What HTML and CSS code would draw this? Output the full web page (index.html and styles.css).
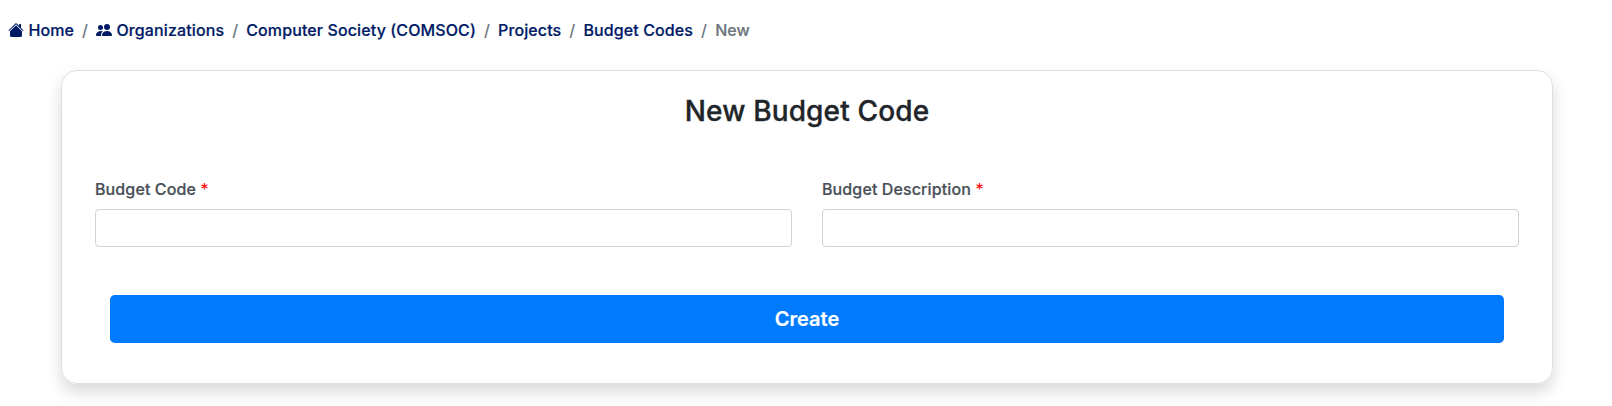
FILE: index.html
```html
<!DOCTYPE html>
<html lang="en">
<head>
<meta charset="utf-8">
<title>New Budget Code</title>
<link rel="stylesheet" href="styles.css">
</head>
<body>
<nav>
<ol class="breadcrumb">
<li><a href="#"><svg class="icon" viewBox="0 0 16 16"><path d="M8.707 1.5a1 1 0 0 0-1.414 0L.646 8.146a.5.5 0 0 0 .708.708L8 2.207l6.646 6.647a.5.5 0 0 0 .708-.708L13 5.793V2.500a.5.5 0 0 0-.5-.5h-1a.5.5 0 0 0-.5.5v1.293z"/><path d="m8 3.293 6 6V13.500a1.500 1.500 0 0 1-1.500 1.500h-9A1.500 1.500 0 0 1 2 13.500V9.293z"/></svg> Home</a></li>
<li><a href="#"><svg class="icon" viewBox="0 0 16 16"><path d="M7 14s-1 0-1-1 1-4 5-4 5 3 5 4-1 1-1 1zm4-6a3 3 0 1 0 0-6 3 3 0 0 0 0 6m-5.784 6A2.240 2.240 0 0 1 5 13c0-1.355.68-2.750 1.936-3.720A6.300 6.300 0 0 0 5 9c-4 0-5 3-5 4s1 1 1 1zM4.500 8a2.500 2.500 0 1 0 0-5 2.500 2.500 0 0 0 0 5"/></svg> Organizations</a></li>
<li><a href="#">Computer Society (COMSOC)</a></li>
<li><a href="#">Projects</a></li>
<li><a href="#">Budget Codes</a></li>
<li class="active">New</li>
</ol>
</nav>
<main class="card">
<h1 class="title">New Budget Code</h1>
<form>
<div class="fields">
<div class="field"><label for="code">Budget Code <span class="required">*</span></label><input id="code" type="text"></div>
<div class="field"><label for="description">Budget Description <span class="required">*</span></label><input id="description" type="text"></div>
</div>
<button class="submit" type="button">Create</button>
</form>
</main>
</body>
</html>
```
FILE: styles.css
```css
* { box-sizing: border-box; }
body { margin: 0; min-height: 100vh; background: #fff; color: #212529; font: 500 16px/24px Inter, sans-serif; letter-spacing: .115px; -webkit-text-stroke: .2px; overflow: hidden; }
.breadcrumb { display: flex; list-style: none; margin: 0; padding: 18px 8px 0; }
.breadcrumb li + li::before { content: "/"; padding: 0 8px; color: #6c757d; -webkit-text-stroke: 0; }
.breadcrumb a { color: #001a66; text-decoration: none; }
.breadcrumb .active { color: #6c757d; }
.icon { width: 16px; height: 16px; fill: currentColor; vertical-align: -2px; }
.card { width: 1492px; height: 314px; margin: 28px auto 0 61px; padding: 23px 33px; border: 1px solid #dfdfdf; border-radius: 16px; box-shadow: 0 8px 16px rgba(0, 0, 0, .15); }
.title { margin: 0; text-align: center; font-size: 28px; line-height: 34px; font-weight: 500; letter-spacing: .14px; -webkit-text-stroke: .35px; }
.fields { display: grid; grid-template-columns: 1fr 1fr; gap: 30px; margin-top: 49px; }
.field label { display: block; margin-bottom: 8px; color: #495057; }
.required { color: #f00; -webkit-text-stroke: 0; font-weight: 400; }
.field input { display: block; width: 100%; height: 38px; border: 1px solid #ced4da; border-radius: 4px; }
.submit { display: block; width: calc(100% - 30px); height: 48px; margin: 48px 15px 0; border: 0; border-radius: 4.8px; background: #007bff; color: #fff; font: 600 20px/30px Inter, sans-serif; }
```
